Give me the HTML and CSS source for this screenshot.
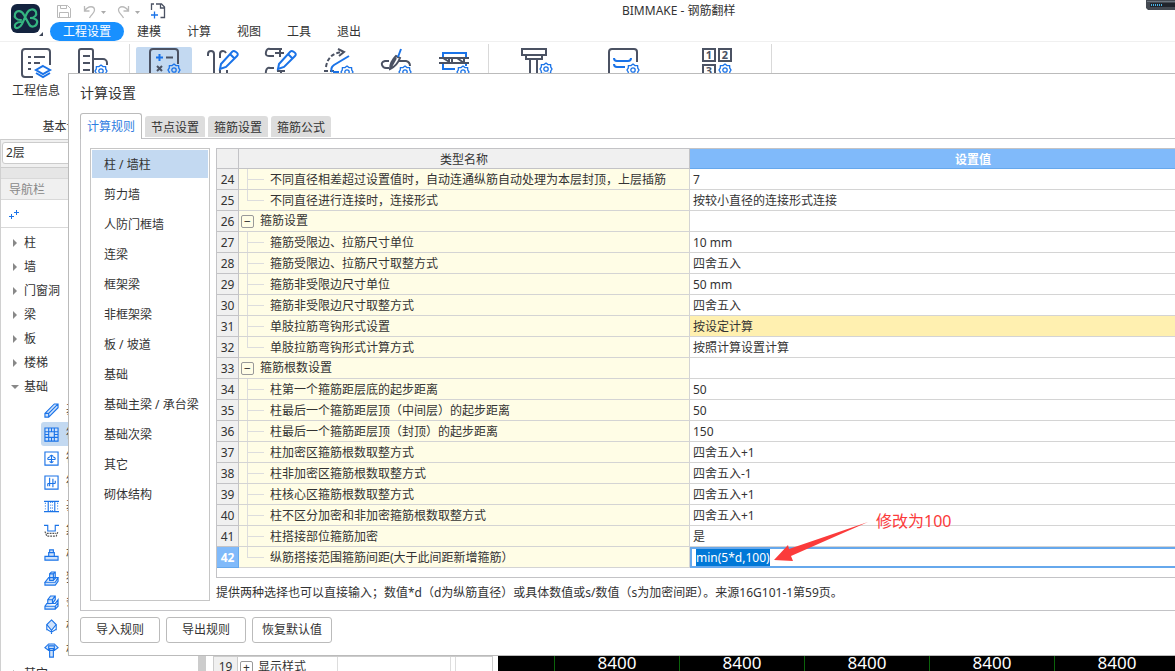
FILE: index.html
```html
<!DOCTYPE html>
<html lang="zh-CN">
<head>
<meta charset="utf-8">
<title>BIMMAKE - 钢筋翻样</title>
<link rel="stylesheet" href="styles.css">
</head>
<body>
<svg class="defs" width="0" height="0" aria-hidden="true">
  <symbol id="gear" viewBox="0 0 14 14">
    <path d="M7 1l2 1.600 2.600.1.2 2.500L13 7l-1.200 1.900-.2 2.400-2.600.2L7 13l-2-1.500-2.600-.2-.2-2.400L1 7l1.200-1.800.2-2.500L5 2.600z" fill="none" stroke="#1a73e8" stroke-width="1.300"/>
    <circle cx="7" cy="7" r="2.200" fill="none" stroke="#1a73e8" stroke-width="1.300"/>
  </symbol>
</svg>
<div class="app">
  <header class="top">
    <svg class="logo" viewBox="0 0 34 34">
      <rect x="1" y="1" width="29" height="29" rx="6" fill="#13233f"/>
      <path d="M11 17c-5 0-7-3-6-6 2-5 7-3 9 1l5 9c2 4 7 3 8-1 1-3-2-5-7-5 5 0 7-3 6-6-2-4-7-3-9 1l-5 11c-2 4-6 5-7 3s1-5 6-5" fill="none" stroke="#35b581" stroke-width="2.200" stroke-linecap="round"/>
      <path d="M33 29v4h-4z" fill="#3d4658"/>
    </svg>
    <div class="topmain">
      <div class="titlebar">
        <div class="quick">
          <button aria-label="保存"><svg width="16" height="16" viewBox="0 0 16 16" fill="none" stroke="#b9b9b9"><path d="M1.500 2.500h10l3 3v9h-13zM4.500 2.500v3h6v-3M3.500 14.500v-5h9v5"/></svg></button>
          <button aria-label="撤销"><svg width="24" height="16" viewBox="0 0 24 16" fill="none" stroke="#b9b9b9" stroke-width="1.300"><path d="M2.500 3v5h5M2.500 8c4-6 10-5 10-1 0 3-3 4-5 8"/><path d="M19 8h5l-2.500 3z" fill="#aaa" stroke="none"/></svg></button>
          <button aria-label="重做"><svg width="24" height="16" viewBox="0 0 24 16" fill="none" stroke="#b9b9b9" stroke-width="1.300"><path d="M12.500 3v5h-5M12.500 8c-4-6-10-5-10-1 0 3 3 4 5 8"/><path d="M19 8h5l-2.500 3z" fill="#aaa" stroke="none"/></svg></button>
          <button aria-label="新建"><svg width="16" height="16" viewBox="0 0 16 16" fill="none" stroke="#4b5263" stroke-width="1.300"><path d="M4 1H1.500v6M6 1h5.500l3 3v10.500h-4M10.500 1v4h4"/><path d="M1 12h7M4.500 8.500v7" stroke="#1a73e8"/></svg></button>
        </div>
        <h1 class="apptitle">BIMMAKE - 钢筋翻样</h1>
      </div>
      <nav class="menu">
        <button class="on">工程设置</button><button>建模</button><button>计算</button><button>视图</button><button>工具</button><button>退出</button>
      </nav>
    </div>
    <svg class="recorder" width="29" height="10" viewBox="0 0 29 10"><path d="M0 0h29v10H2L0 8z" fill="#454a52"/><path d="M1 1h28v1H1z" fill="#6d7680"/><path d="M4 3h25v4H4z" fill="#20242c"/><path d="M5 5h12" stroke="#49b4e6" stroke-width="2" stroke-dasharray="1 1"/></svg>
  </header>

  <div class="ribbon">
    <section class="group g1">
      <div class="tools">
        <button class="tool"><svg viewBox="0 0 30 30"><path d="M12 29H4a3 3 0 0 1-3-3V4a3 3 0 0 1 3-3h22a3 3 0 0 1 3 3v13" class="d"/><path d="M7 9h3M13 9h11M7 15h3M13 15h6M7 21h3" class="d"/><path d="M22 18l7 4-7 4-7-4zM15 25l7 4 7-4" class="b"/></svg><span>工程信息</span></button>
        <button class="tool"><svg viewBox="0 0 30 30"><path d="M1 29V3a2 2 0 0 1 2-2h10a2 2 0 0 1 2 2v24M15 11h10a4 4 0 0 1 4 4v2M5 8h7M5 15h7M5 22h7" class="d"/><use href="#gear" x="16" y="16" width="14" height="14"/></svg></button>
      </div>
      <div class="caption">基本设置</div>
    </section>
    <section class="group g2">
      <div class="tools">
        <button class="tool on"><svg viewBox="0 0 30 30"><path d="M1 29V4a3 3 0 0 1 3-3h22a3 3 0 0 1 3 3v12" class="d"/><path d="M7 9.500h7M10.500 6v7" class="b"/><path d="M17 9.500h7M8 18l5 5M13 18l-5 5" class="d"/><use href="#gear" x="18" y="15" width="14" height="14"/></svg></button>
        <button class="tool"><svg viewBox="0 0 30 30"><path d="M1 8V6q0-3 3-3t3 3v23M13 10V6q0-3 3-3 2 0 3 2M13 22v7M20 22v7" class="d"/><path d="M14 16L25 4q1-2 4 0t1 4L19 19l-6 2zM23 6l5 5" class="b"/></svg></button>
        <button class="tool"><svg viewBox="0 0 30 30"><path d="M9 8H4Q0 8 1 4t4-3h12M10 5h9M15 1v8M9 27H4Q0 27 1 23t4-3h4M12 23h8M16 23v6" class="d"/><path d="M14 16L25 4q1-2 4 0t1 4L19 19l-6 2zM23 6l5 5" class="b"/></svg></button>
        <button class="tool"><svg viewBox="0 0 30 30"><path d="M1 23h10M3 19q2-14 17-15" class="d" stroke-dasharray="4 2"/><path d="M15 1l6 3-5 4" class="d"/><path d="M26 8L11 17q-4 3-2 7M10 24h6" class="b"/><use href="#gear" x="17" y="17" width="14" height="14"/></svg></button>
        <button class="tool"><svg viewBox="0 0 30 30"><path d="M8 13H4q-4 1-3 4t4 3h3M17 13h8q4 1 4 5M9 21q0-7 6-13l4 2q-3 8-10 11zM15 10l-5 9" class="d"/><path d="M17 9l3-8" class="b"/><use href="#gear" x="17" y="17" width="14" height="14"/></svg></button>
        <button class="tool"><svg viewBox="0 0 30 30"><path d="M4 10V5h23v5M4 16v5h12M27 16v2" class="b"/><path d="M0 10h30M0 15h30" class="d"/><path d="M4 10l8 5M10 10v5M18 10l7 5M25 10v5M13 10v5" class="d"/><use href="#gear" x="17" y="17" width="14" height="14"/></svg></button>
      </div>
    </section>
    <section class="group g3">
      <div class="tools">
        <button class="tool first"><svg viewBox="0 0 30 30"><path d="M1 1h24v6H1zM5 7v4h16V7M9 11v17h7V11" class="d"/><use href="#gear" x="18" y="14" width="14" height="14"/></svg></button>
        <button class="tool"><svg viewBox="0 0 30 30"><path d="M1 29V4a3 3 0 0 1 3-3h22a3 3 0 0 1 3 3v10" class="d"/><path d="M6 10q0 3 3 3h11q3 0 3-3M6 16q0 3 3 3h8" class="b"/><use href="#gear" x="18" y="15" width="14" height="14"/></svg></button>
        <button class="tool"><svg viewBox="0 0 30 30"><path d="M1 1h12v12H1zM17 1h12v12H17zM1 17h12v12H1z" class="d"/><g class="n"><text x="7" y="11">1</text><text x="23" y="11">2</text><text x="7" y="27">3</text></g><use href="#gear" x="16" y="15" width="14" height="14"/></svg></button>
      </div>
    </section>
  </div>

  <div class="work">
    <aside class="side">
      <div class="floor"><label class="hide" for="floor">楼层</label><select id="floor"><option>2层</option></select></div>
      <div class="strip"></div>
      <h2 class="navhead">导航栏</h2>
      <div class="navtools"><button aria-label="展开"><svg width="12" height="12" viewBox="0 0 12 12" stroke="#1a73e8"><path d="M8.500 1v5M6 3.500h5M3.500 5v5M1 7.500h5"/></svg></button></div>
      <div class="treewrap">
        <ul class="tree">
          <li>柱</li><li>墙</li><li>门窗洞</li><li>梁</li><li>板</li><li>楼梯</li><li class="open">基础</li>
          <li class="sub"><svg viewBox="0 0 16 16"><path d="M1 11L11 1h4v4L5 15H1zM1 11h4v4M5 11L15 1"/></svg>基础梁</li>
          <li class="sub on"><svg viewBox="0 0 16 16"><path d="M1 1h14v14H1zM5 1v14M11 1v14M1 5h14M1 11h14M8 1v4M8 11v4M1 8h4M11 8h4"/></svg>筏板基础</li>
          <li class="sub"><svg class="o" viewBox="0 0 16 16"><path d="M1 1h14v14H1zM4 9h8M8 4v8M6 6q2-3 4 0M6 11q2 3 4 0M4 9q0-3 2-2M12 9q0-3-2-2"/></svg>筏板主筋</li>
          <li class="sub"><svg class="o" viewBox="0 0 16 16"><path d="M1 1h14v14H1zM6 3v9M9.500 4v9M4 9h8M4 9v3M12 9V6"/></svg>筏板负筋</li>
          <li class="sub"><svg viewBox="0 0 16 16"><path d="M0 2.500h16M0 13.500h16M4.500 3v10M11.500 3v10"/><path d="M7 3v10M9 3v10M1.500 4v9M14.500 4v9" stroke-dasharray="1 2"/></svg>基础板带</li>
          <li class="sub"><svg class="o" viewBox="0 0 16 16"><path d="M0 2.500h4v6h8v-6h4"/><path d="M1 9l2 5h10l2-5M3 11h10" stroke="#555" stroke-dasharray="2 1"/></svg>集水坑</li>
          <li class="sub"><svg viewBox="0 0 16 16"><path d="M1 10h14v4H1zM5 10V6h6v4M6 6V3h4v3"/></svg>柱墩</li>
          <li class="sub"><svg viewBox="0 0 16 16"><path d="M1 12l4-5h10l-3 5zM1 12v3h11l3-4V7M6 9V3l2-2h4v7l-2 2H6zM6 3h4v6M10 3l2-2"/></svg>独立基础</li>
          <li class="sub"><svg viewBox="0 0 16 16"><path d="M1 12h11v3H1zM12 12l3-4v4l-3 3M1 12l2-3h9l3-4v3M4 9V5l3-4h5v4L9 9zM4 5h5v4M9 5l3-4"/></svg>条形基础</li>
          <li class="sub"><svg class="o" viewBox="0 0 16 16"><path d="M8 1l5 5-5 6-5-6z" fill="#cfe2fb"/><path d="M3 6v6M13 6v6M8 12v4M3 11l5 3 5-3"/></svg>桩承台</li>
          <li class="sub"><svg viewBox="0 0 16 16"><path d="M1 5l4-4h6l4 4-4 3H5zM5 8V3h6v5M6 6h4v9H6z"/></svg>桩(U)</li>
          <li>其它</li>
        </ul>
        <div class="scroll"></div>
      </div>
    </aside>
    <section class="props">
      <table><tbody><tr><th scope="row">19</th><td class="name"><span class="box">+</span>显示样式</td><td class="mid"></td><td></td></tr></tbody></table>
    </section>
    <section class="canvas">
      <div class="lane short"></div><div class="lane">8400</div><div class="lane">8400</div><div class="lane">8400</div><div class="lane">8400</div><div class="lane">8400</div>
    </section>
  </div>

  <section class="dialog" role="dialog" aria-labelledby="dlg">
    <h2 id="dlg">计算设置</h2>
    <div class="tabs" role="tablist">
      <button role="tab" class="on">计算规则</button><button role="tab">节点设置</button><button role="tab">箍筋设置</button><button role="tab">箍筋公式</button>
    </div>
    <div class="panel">
      <ul class="cats">
        <li class="on">柱 / 墙柱</li><li>剪力墙</li><li>人防门框墙</li><li>连梁</li><li>框架梁</li><li>非框架梁</li><li>板 / 坡道</li><li>基础</li><li>基础主梁 / 承台梁</li><li>基础次梁</li><li>其它</li><li>砌体结构</li>
      </ul>
      <div class="detail">
        <div class="gridbox">
          <table class="grid">
            <colgroup><col class="c1"><col class="c2"><col></colgroup>
            <thead><tr><th></th><th>类型名称</th><th class="sel">设置值</th></tr></thead>
            <tbody>
              <tr><th>24</th><td class="leaf">不同直径相差超过设置值时，自动连通纵筋自动处理为本层封顶，上层插筋</td><td>7</td></tr>
              <tr><th>25</th><td class="leaf last">不同直径进行连接时，连接形式</td><td>按较小直径的连接形式连接</td></tr>
              <tr><th>26</th><td class="root"><span class="box">−</span>箍筋设置</td><td></td></tr>
              <tr><th>27</th><td class="leaf">箍筋受限边、拉筋尺寸单位</td><td>10 mm</td></tr>
              <tr><th>28</th><td class="leaf">箍筋受限边、拉筋尺寸取整方式</td><td>四舍五入</td></tr>
              <tr><th>29</th><td class="leaf">箍筋非受限边尺寸单位</td><td>50 mm</td></tr>
              <tr><th>30</th><td class="leaf">箍筋非受限边尺寸取整方式</td><td>四舍五入</td></tr>
              <tr><th>31</th><td class="leaf">单肢拉筋弯钩形式设置</td><td class="hl">按设定计算</td></tr>
              <tr><th>32</th><td class="leaf last">单肢拉筋弯钩形式计算方式</td><td>按照计算设置计算</td></tr>
              <tr><th>33</th><td class="root"><span class="box">−</span>箍筋根数设置</td><td></td></tr>
              <tr><th>34</th><td class="leaf">柱第一个箍筋距层底的起步距离</td><td>50</td></tr>
              <tr><th>35</th><td class="leaf">柱最后一个箍筋距层顶（中间层）的起步距离</td><td>50</td></tr>
              <tr><th>36</th><td class="leaf">柱最后一个箍筋距层顶（封顶）的起步距离</td><td>150</td></tr>
              <tr><th>37</th><td class="leaf">柱加密区箍筋根数取整方式</td><td>四舍五入+1</td></tr>
              <tr><th>38</th><td class="leaf">柱非加密区箍筋根数取整方式</td><td>四舍五入-1</td></tr>
              <tr><th>39</th><td class="leaf">柱核心区箍筋根数取整方式</td><td>四舍五入+1</td></tr>
              <tr><th>40</th><td class="leaf">柱不区分加密和非加密箍筋根数取整方式</td><td>四舍五入+1</td></tr>
              <tr><th>41</th><td class="leaf">柱搭接部位箍筋加密</td><td>是</td></tr>
              <tr><th class="sel">42</th><td class="leaf last"><label for="gap">纵筋搭接范围箍筋间距(大于此间距新增箍筋）</label></td><td class="edit"><input id="gap" type="text" value="min(5*d,100)"></td></tr>
            </tbody>
          </table>
        </div>
        <p class="note">提供两种选择也可以直接输入；数值*d（d为纵筋直径）或具体数值或s/数值（s为加密间距）。来源16G101-1第59页。</p>
      </div>
    </div>
    <div class="actions"><button>导入规则</button><button>导出规则</button><button>恢复默认值</button></div>
  </section>

  <svg class="arrow" width="96" height="42" viewBox="0 0 96 42"><path d="M1 40l14-15 1 4L95 2 18 36l2 5z" fill="#fb3b3b"/></svg>
  <div class="remark">修改为100</div>
</div>
<script src="main.js"></script>
</body>
</html>
```
FILE: main.js
```js
const gap = document.getElementById('gap');
gap.focus({ preventScroll: true });
gap.select();
```
FILE: styles.css
```css
* { box-sizing: border-box; }
html, body { overflow: clip; }
body {
  margin: 0;
  font: 12px/18px "Noto Sans", "Noto Sans CJK SC", sans-serif;
  color: #333;
}
button {
  font: inherit;
  color: inherit;
  background: none;
  border: 0;
  padding: 0;
  white-space: nowrap;
}
h1, h2, p, ul { margin: 0; padding: 0; font-weight: normal; font-size: 12px; }
ul { list-style: none; }
table { border-collapse: collapse; }
.defs { position: absolute; }
.hide { position: absolute; width: 1px; height: 1px; overflow: hidden; clip-path: inset(50%); }
.app {
  position: relative;
  display: flex;
  flex-direction: column;
  height: 100vh;
  overflow: clip;
  background: #fff;
}

/* title bar and menu */
.top { display: flex; border-bottom: 1px solid #f0f0f0; padding-left: 10px; }
.logo { width: 34px; height: 34px; margin: 3px 6px 0 0; flex: none; }
.topmain { flex: 1; }
.titlebar { display: flex; height: 22px; align-items: center; }
.quick { display: flex; gap: 10px; padding-left: 6px; flex: 0 0 572px; }
.quick svg { display: block; }
.menu { display: flex; }
.menu button { padding: 0 13px; height: 19px; line-height: 19px; border-radius: 10px; }
.menu .on { background: #1890ff; color: #fff; }
.recorder { position: absolute; top: 0; right: 0; }

/* ribbon */
.ribbon { display: flex; height: 97px; flex: none; }
.group {
  display: flex;
  flex-direction: column;
  justify-content: space-between;
  margin-top: 2px;
  padding: 3px 8px;
  border-right: 1px solid #d9d9d9;
}
.tools { display: flex; gap: 1px; }
.g2 { padding: 3px 6px; }
.g2 .tools { gap: 2px; }
.g3 { padding: 3px 7px; }
.g3 .tools { gap: 0; }
.tool { width: 56px; height: 60px; display: flex; flex-direction: column; align-items: center; gap: 4px; padding-top: 1px; border-radius: 2px; }
.tool.on { background: #c3d9f1; }
.g3 .tool { width: 94px; }
.g3 .first { width: 80px; }
.tool svg { width: 30px; height: 30px; overflow: visible; flex: none; }
.tool .d { fill: none; stroke: #4b5263; stroke-width: 2; }
.tool .b { fill: none; stroke: #1a73e8; stroke-width: 2; }
.tool .n { font-size: 11px; font-weight: bold; fill: #4b5263; text-anchor: middle; }
.caption { text-align: center; padding-left: 4px; }

/* work area */
.work { flex: 1; display: flex; min-height: 0; }
.side { width: 206px; flex: none; display: flex; flex-direction: column; min-height: 0; border-left: 1px solid #d0d0d0; }
.floor { background: #f0f0f0; padding: 2px 1px; height: 28px; border-top: 1px solid #ccc; }
.floor select { width: 100%; height: 22px; font: inherit; color: inherit; border: 1px solid #ccc; border-radius: 3px; background: #fff; padding: 0; appearance: none; padding-left: 3px; }
.strip { height: 11px; background: #e6e6e6; flex: none; border-top: 1px solid #ccc; }
.navhead { height: 22px; line-height: 21px; padding-left: 8px; color: #888; background: #f0f0f0; border: 1px solid #d9d9d9; border-width: 1px 0; flex: none; }
.navtools { height: 28px; flex: none; border-bottom: 1px solid #d9d9d9; padding: 8px 7px; }
.navtools svg { display: block; }
.treewrap { flex: 1; min-height: 0; display: flex; overflow: hidden; }
.tree { flex: 1; padding-top: 3px; }
.tree li { display: flex; align-items: center; height: 24px; padding-left: 12px; }
.tree li:not(.sub)::before { content: ""; border: 4px solid transparent; border-left-color: #888; border-right-width: 0; margin-right: 7px; }
.tree li.open { height: 23px; }
.tree li.open::before { border: 4px solid transparent; border-top-color: #888; border-bottom-width: 0; margin: 0 5px 0 -2px; }
.tree li.sub { margin-left: 40px; padding-left: 3px; gap: 7px; }
.tree li.on { background: #c3d9f1; border-radius: 3px; }
.sub svg { width: 15px; height: 15px; fill: #cfe2fb; stroke: #1a73e8; stroke-width: 1.2; flex: none; }
.sub svg.o { fill: none; }
.scroll { width: 8px; background: #ccc; }
.props { width: 285px; flex: none; margin-left: 7px; display: flex; flex-direction: column; justify-content: flex-end; padding-right: 5px; }
.props table { height: 15px; width: 100%; border-left: 1px solid #ccc; border-right: 1px solid #ccc; display: flex; overflow: hidden; }
.props tbody { flex: 1; }
.props tr { display: flex; height: 21px; border-top: 1px solid #ccc; }
.props th { width: 24px; font-weight: normal; background: #f0f0f0; border-right: 1px solid #ccc; padding: 1px 0 0; }
.props td { border-right: 1px solid #ddd; padding: 1px 2px; }
.props .name { width: 100px; display: flex; gap: 5px; align-items: center; }
.props .mid { width: 113px; }
.canvas { flex: 1; display: flex; background: #000; overflow: hidden; }
.lane { flex: 0 0 125px; border-right: 1px solid #0b640b; display: flex; align-items: flex-end; justify-content: center; color: #fff; font-size: 17px; line-height: 16px; }
.lane.short { flex-basis: 57px; }

/* settings window, wider than the visible desktop */
.dialog {
  position: absolute;
  top: 73px;
  left: 68px;
  right: -103px;
  background: #fff;
  border: 1px solid #bbb;
  padding: 8px 11px 12px;
}
.dialog h2 { font-size: 14px; line-height: 22px; }
.tabs { display: flex; gap: 3px; align-items: flex-end; margin-top: 9px; }
.tabs button { width: 60px; height: 21px; line-height: 22px; padding-top: 1px; background: #ddd; border-radius: 3px 3px 0 0; margin-bottom: 1px; }
.tabs .on { width: 62px; height: 26px; line-height: 24px; padding: 0; background: #fff; color: #2f7de1; border: 1px solid #bbb; border-bottom: 0; margin: 0 0 -1px; z-index: 1; }
.panel { border: 1px solid #c3c3c6; padding: 9px 8px 9px 9px; display: flex; gap: 6px; }
.cats { width: 120px; flex: none; border: 1px solid #c6c6c6; padding: 1px; }
.cats li { height: 28px; line-height: 30px; margin-bottom: 2px; padding-left: 12px; white-space: nowrap; }
.cats .on { background: #c3d9f1; }
.detail { flex: 1; min-width: 0; }
.gridbox { border: 1px solid #c3c3c6; border-width: 1px 0 1px 1px; padding-bottom: 9px; }
.grid { width: 100%; table-layout: fixed; border-collapse: separate; border-spacing: 0; }
.grid .c1 { width: 22px; }
.grid .c2 { width: 451px; }
.grid th { height: 21px; line-height: 18px; padding: 2px 0 0; font-weight: normal; background: #f0f0f0; border: 1px solid #c3c3c6; border-width: 0 1px 1px 0; }
.grid thead th { height: 20px; line-height: 17px; }
.grid .sel { background: #80bafa; color: #fff; font-weight: bold; border-color: #66a8ec; }
.grid td { height: 21px; line-height: 18px; padding: 2px 0 0 3px; border: 1px solid #d4d4d4; border-width: 0 1px 1px 0; white-space: nowrap; }
.grid .leaf, .grid .root { background-color: #fffde6; background-repeat: no-repeat; }
.grid .leaf {
  padding-left: 31px;
  background-image: linear-gradient(#ddd, #ddd), linear-gradient(#ddd, #ddd);
  background-position: 8px 10px, 8px 0;
  background-size: 17px 1px, 1px 20px;
}
.grid .last { background-size: 17px 1px, 1px 10px; }
.grid .root { padding: 0 0 0 2px; }
.box { display: inline-flex; width: 13px; height: 13px; align-items: center; justify-content: center; line-height: 11px; border: 1px solid #999; border-radius: 2px; background: #fff; flex: none; }
.grid .box { margin-right: 6px; background: none; vertical-align: middle; }
.grid .hl { background: #fff0b0; }
.grid .edit { padding: 0; border: 0; }
.edit input { display: block; width: 100%; height: 21px; border: 2px solid #66a8ec; font: inherit; color: inherit; padding: 0 4px; outline: 0; background: #fff; }
.edit input::selection { background: #0078d7; color: #fff; }
.note { padding-top: 6px; line-height: 17px; white-space: nowrap; }
.actions { display: flex; gap: 6px; margin-top: 6px; }
.actions button { width: 80px; height: 26px; border: 1px solid #bbb; border-radius: 3px; }

/* markup drawn over the window */
.arrow { position: absolute; left: 773px; top: 520px; }
.remark { position: absolute; left: 876px; top: 510px; font-size: 16px; line-height: 22px; color: #fb3b3b; }
```
